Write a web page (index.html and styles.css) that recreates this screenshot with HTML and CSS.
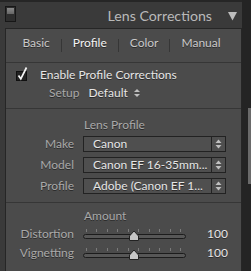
FILE: index.html
```html
<!DOCTYPE html>
<html lang="en">
<head>
    <meta charset="UTF-8">
    <title>Lens Corrections</title>
    <link rel="stylesheet" href="styles.css">
</head>
<body>
<div class="screen">
    <div class="column">
        <div class="header">
            <span class="switch"><span class="switch-on"></span></span>
            <span class="title">Lens Corrections</span>
            <svg class="collapse" width="9" height="9" viewBox="0 0 9 9"><polygon points="0,0 9,0 4.5,8.5" fill="#bdbdbd"/></svg>
        </div>

        <div class="panel">
            <div class="tabs">
                <span class="tab">Basic</span><span class="sep"></span>
                <span class="tab active">Profile</span><span class="sep"></span>
                <span class="tab">Color</span><span class="sep"></span>
                <span class="tab">Manual</span>
            </div>

            <div class="section enable">
                <div class="check-row">
                    <svg class="checkbox" width="14" height="16" viewBox="0 0 14 16">
                        <rect x="0.5" y="4.5" width="10" height="9" fill="#232323" stroke="#101010"/>
                        <path d="M2.5 8.5 L4.8 11.8 L10.5 0.5" fill="none" stroke="#f4f4f4" stroke-width="1.7"/>
                    </svg>
                    <span class="bright">Enable Profile Corrections</span>
                </div>
                <div class="setup-row">
                    <span class="dim">Setup</span>
                    <span class="bright">Default</span>
                    <svg class="updown" width="6" height="16" viewBox="0 0 6 16"><polygon points="0,7 6,7 3,4" fill="#c0c0c0"/><polygon points="0,9 6,9 3,12" fill="#c0c0c0"/></svg>
                </div>
            </div>

            <div class="section profile">
                <div class="heading">Lens Profile</div>
                <div class="row">
                    <span class="label">Make</span>
                    <div class="dropdown"><span class="dd-text">Canon</span><span class="dd-arrows"><svg width="7" height="14" viewBox="0 0 7 14"><polygon points="0.5,6 6.5,6 3.5,2.5" fill="#c0c0c0"/><polygon points="0.5,8 6.5,8 3.5,11.5" fill="#c0c0c0"/></svg></span></div>
                </div>
                <div class="row">
                    <span class="label">Model</span>
                    <div class="dropdown"><span class="dd-text">Canon EF 16-35mm...</span><span class="dd-arrows"><svg width="7" height="14" viewBox="0 0 7 14"><polygon points="0.5,6 6.5,6 3.5,2.5" fill="#c0c0c0"/><polygon points="0.5,8 6.5,8 3.5,11.5" fill="#c0c0c0"/></svg></span></div>
                </div>
                <div class="row">
                    <span class="label">Profile</span>
                    <div class="dropdown"><span class="dd-text">Adobe (Canon EF 1...</span><span class="dd-arrows"><svg width="7" height="14" viewBox="0 0 7 14"><polygon points="0.5,6 6.5,6 3.5,2.5" fill="#c0c0c0"/><polygon points="0.5,8 6.5,8 3.5,11.5" fill="#c0c0c0"/></svg></span></div>
                </div>
            </div>

            <div class="section amount">
                <div class="heading">Amount</div>
                <div class="row slider-row">
                    <span class="label">Distortion</span>
                    <svg class="slider" width="103" height="16" viewBox="0 0 103 16">
                        <g stroke="#7a7a7a" stroke-width="1"><path d="M3.5 3v3M13.5 3v3M24.5 3v3M34.5 3v3M45.5 3v3M55.5 3v3M66.5 3v3M76.5 3v3M87.5 3v3M97.5 3v3"/></g>
                        <rect x="0.5" y="8.5" width="102" height="4" rx="2" fill="#575757" stroke="#1c1c1c"/>
                        <polygon points="46.5,14.5 46.5,10 51,5 55.5,10 55.5,14.5" fill="#c6c6c6" stroke="#222"/>
                    </svg>
                    <span class="bright value">100</span>
                </div>
                <div class="row slider-row">
                    <span class="label">Vignetting</span>
                    <svg class="slider" width="103" height="16" viewBox="0 0 103 16">
                        <g stroke="#7a7a7a" stroke-width="1"><path d="M3.5 3v3M13.5 3v3M24.5 3v3M34.5 3v3M45.5 3v3M55.5 3v3M66.5 3v3M76.5 3v3M87.5 3v3M97.5 3v3"/></g>
                        <rect x="0.5" y="8.5" width="102" height="4" rx="2" fill="#575757" stroke="#1c1c1c"/>
                        <polygon points="46.5,14.5 46.5,10 51,5 55.5,10 55.5,14.5" fill="#c6c6c6" stroke="#222"/>
                    </svg>
                    <span class="bright value">100</span>
                </div>
            </div>
        </div>
    </div>
    <div class="gutter"><div class="thumb"></div></div>
</div>
</body>
</html>
```

FILE: styles.css
```css
body {
    margin: 0;
    background-color: #242424;
    font-family: Lato, "Liberation Sans", sans-serif;
    font-size: 12px;
    line-height: 16px;
}

.screen {
    display: flex;
    width: 251px;
    height: 271px;
    overflow: hidden;
}

.column {
    width: 242px;
    display: flex;
    flex-direction: column;
    background-color: #3a3a3a;
    border-top: 2px solid #262626;
    box-sizing: border-box;
}

/* panel header */
.header {
    height: 26px;
    display: flex;
    align-items: flex-start;
}

.switch {
    width: 11px;
    height: 16px;
    margin: 4px 0 0 5px;
    box-sizing: border-box;
    border: 1px solid #171717;
    background-color: #2e2e2e;
    padding: 1px;
}

.switch-on {
    display: block;
    height: 6px;
    background: linear-gradient(#8a8a8a, #666);
}

.title {
    margin: 5px 0 0 auto;
    font-size: 14.2px;
    line-height: 17px;
    color: #b9b9b9;
}

.collapse {
    margin: 10px 5px 0 16px;
}

/* panel body */
.panel {
    flex: 1;
    margin-left: 5px;
    background-color: #4b4b4b;
    border: 1px solid #262626;
    border-bottom: none;
    text-shadow: 0 1px 0 rgba(0, 0, 0, 0.45);
}

.tabs {
    height: 33px;
    box-sizing: border-box;
    padding: 6px 4px 0 0;
    display: flex;
    justify-content: center;
    align-items: flex-start;
}

.tab {
    color: #c9c9c9;
}

.tab.active {
    color: #f4f4f4;
}

.sep {
    width: 1px;
    height: 13px;
    margin: 4px 11px 0;
    background-color: #363636;
}

.section {
    border-top: 1px solid #363636;
}

.bright {
    color: #e6e6e6;
}

.dim, .label, .heading {
    color: #a9a9a9;
}

.enable {
    padding: 4px 0 7px 10px;
}

.check-row {
    display: flex;
}

.checkbox {
    margin-right: 10px;
}

.setup-row {
    display: flex;
    margin: 2px 0 0 33px;
}

.setup-row .bright {
    margin-left: 9px;
}

.updown {
    margin-left: 6px;
}

.profile {
    padding: 8px 0 8px 0;
}

.amount {
    padding-top: 5px;
}

.heading {
    margin-left: 78px;
}

.row {
    display: flex;
    height: 16px;
    margin-top: 5px;
}

.heading + .row {
    margin-top: 3px;
}

.label {
    width: 68px;
    text-align: right;
    margin-right: 9px;
}

.dropdown {
    width: 143px;
    height: 16px;
    box-sizing: border-box;
    display: flex;
    border: 1px solid #222;
    background-color: #4f4f4f;
    line-height: 14px;
}

.dd-text {
    flex: 1;
    padding-left: 9px;
    color: #e6e6e6;
    white-space: nowrap;
    overflow: hidden;
}

.dd-arrows {
    width: 13px;
    display: flex;
    justify-content: center;
    border-left: 1px solid #222;
}

.slider-row {
    padding-right: 13px;
}

.amount .heading + .row {
    margin-top: 2px;
}

.amount .row + .row {
    margin-top: 3px;
}

.value {
    margin-left: auto;
}

/* scrollbar */
.gutter {
    width: 9px;
    background-color: #242424;
}

.thumb {
    width: 3px;
    height: 76px;
    margin: 108px 0 0 6px;
    background-color: #6a6a6a;
}
```
